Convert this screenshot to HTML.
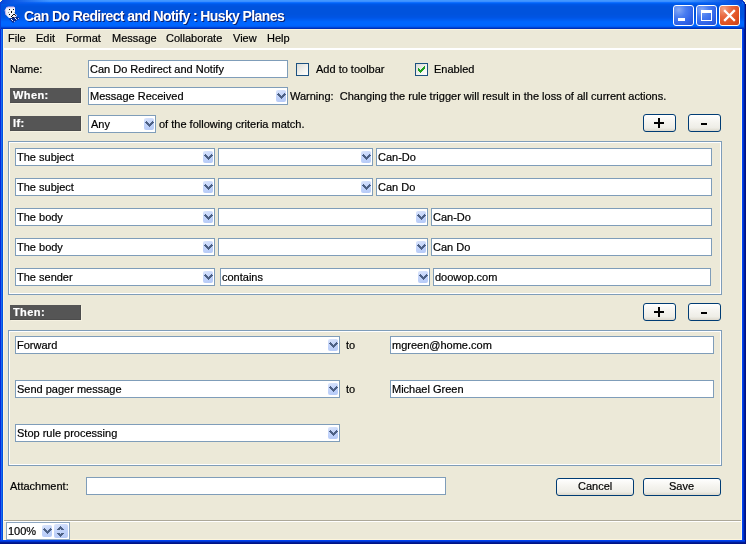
<!DOCTYPE html>
<html><head><meta charset="utf-8">
<style>
*{box-sizing:border-box;margin:0;padding:0}
html,body{width:746px;height:544px;overflow:hidden;background:#FFF9E6}
body{position:relative;will-change:transform;font-family:"Liberation Sans",sans-serif;font-size:11px;color:#000}
.a{position:absolute}
.t{position:absolute;white-space:pre;line-height:13px;font-size:11px;-webkit-text-stroke:0.2px #000}
.tb{position:absolute;border:1px solid #7F9DB9;background:#fff}
.ddb{position:absolute;right:1px;top:2px;width:10px;height:12px;border-radius:2px;background:linear-gradient(160deg,#DCE6FC 0%,#C3D4FA 45%,#B4C9F7 100%)}
.ddb svg{position:absolute;left:0;top:0}
.lbl{position:absolute;left:10px;width:71px;height:15px;background:#555555;color:#fff;font-weight:bold;box-shadow:inset -1px -1px 0 #4C4C4C,1px 1px 0 #F6F2E2}
.lbl span{position:absolute;left:3px;top:1px;line-height:13px;white-space:pre;letter-spacing:0.4px;-webkit-text-stroke:0.2px #fff}
.btn{position:absolute;border:1px solid #003C74;border-radius:3px;background:linear-gradient(180deg,#FFFFFF 0%,#F7F6F2 35%,#EEEDE6 80%,#DCD8CC 100%)}
.grp{position:absolute;border:1px solid #7F9DB9;box-shadow:inset 1px 1px 0 #fff,inset -1px -1px 0 #fff}
</style></head><body>
<!-- window frame -->
<div class="a" style="left:0;top:0;width:746px;height:544px;background:#0040E0"></div>
<!-- title bar -->
<div class="a" style="left:0;top:0;width:746px;height:29px;border-radius:0;background:linear-gradient(180deg,#4297FF 0px,#4297FF 1px,#3A8EFF 1px,#3A8EFF 2px,#0E6FFF 2px,#0E6FFF 3px,#0060F2 3px,#0060F2 4px,#0057E6 4px,#0057E6 5px,#0055E2 5px,#0055E2 6px,#0053DE 6px,#0053DE 7px,#0053DD 7px,#0053DD 8px,#0053DD 8px,#0053DD 9px,#0053DD 9px,#0053DD 10px,#0053DD 10px,#0053DD 11px,#0053DD 11px,#0053DD 12px,#0053DD 12px,#0053DD 13px,#0053DD 13px,#0053DD 14px,#0053DE 14px,#0053DE 15px,#0054E0 15px,#0054E0 16px,#0054E2 16px,#0054E2 17px,#0055E5 17px,#0055E5 18px,#0058EA 18px,#0058EA 19px,#005CF0 19px,#005CF0 20px,#0060F6 20px,#0060F6 21px,#0065FC 21px,#0065FC 22px,#0066FF 22px,#0066FF 23px,#0066FF 23px,#0066FF 24px,#0066FF 24px,#0066FF 25px,#0064FD 25px,#0064FD 26px,#005CF4 26px,#005CF4 27px,#0046D6 27px,#0046D6 28px,#0030B8 28px,#0030B8 29px)"></div>
<div class="a" style="left:0;top:0;width:50px;height:4px;background:linear-gradient(90deg,#0848D8 0px,#0A58E6 12px,rgba(0,88,230,0) 50px)"></div>
<div class="a" style="left:690px;top:0;width:52px;height:4px;background:linear-gradient(90deg,rgba(0,88,230,0) 0px,#0A58E6 40px,#0848D8 52px)"></div>
<svg class="a" style="left:736px;top:0" width="10" height="10" shape-rendering="crispEdges">
<rect x="4" y="0" width="3" height="1" fill="#0A3CC8"/><rect x="6" y="1" width="2" height="1" fill="#0A3CC8"/><rect x="7" y="2" width="2" height="1" fill="#0830B8"/><rect x="8" y="3" width="1" height="2" fill="#0628A8"/>
<rect x="7" y="0" width="3" height="1" fill="#FFF9E6"/><rect x="8" y="1" width="2" height="1" fill="#FFF9E6"/><rect x="9" y="2" width="1" height="2" fill="#FFF9E6"/>
</svg>
<svg class="a" style="left:0;top:0" width="3" height="3" shape-rendering="crispEdges"><rect x="0" y="0" width="2" height="1" fill="#FFF9E6"/><rect x="0" y="1" width="1" height="1" fill="#FFF9E6"/><rect x="1" y="1" width="1" height="1" fill="#0A40C8"/></svg>
<!-- left frame -->
<div class="a" style="left:0;top:29px;width:1px;height:515px;background:#0A28D8"></div>
<div class="a" style="left:1px;top:29px;width:1px;height:515px;background:#1A6CF0"></div>
<div class="a" style="left:2px;top:29px;width:1px;height:515px;background:#0052E0"></div>
<!-- right frame -->
<div class="a" style="left:742px;top:29px;width:1px;height:515px;background:#0044F2"></div>
<div class="a" style="left:743px;top:29px;width:1px;height:515px;background:#0032CC"></div>
<div class="a" style="left:744px;top:29px;width:1px;height:515px;background:#001C9A"></div>
<div class="a" style="left:744px;top:4px;width:1px;height:25px;background:linear-gradient(180deg,#0038C8,#0030B0)"></div>
<div class="a" style="left:745px;top:4px;width:1px;height:540px;background:#001385"></div>
<div class="a" style="left:0px;top:2px;width:1px;height:27px;background:#0840D8"></div>
<!-- bottom frame -->
<div class="a" style="left:0;top:540px;width:745px;height:1px;background:#0042F0"></div>
<div class="a" style="left:0;top:541px;width:745px;height:1px;background:#0034CE"></div>
<div class="a" style="left:0;top:542px;width:745px;height:1px;background:#001C9A"></div>
<div class="a" style="left:0;top:543px;width:746px;height:1px;background:#001385"></div>
<!-- client -->
<div class="a" style="left:3px;top:29px;width:739px;height:511px;background:#ECE9D8;border:1px solid #FDF5DC"></div>

<!-- title buttons -->
<div class="a" style="left:673px;top:5px;width:21px;height:21px;border:1px solid #fff;border-radius:3px;background:radial-gradient(circle at 25% 20%,#86A9F5 0%,#4A7DF0 35%,#2F62E8 70%,#2450D0 100%)">
<div class="a" style="left:4px;top:12px;width:7px;height:3px;background:#fff"></div></div>
<div class="a" style="left:696px;top:5px;width:21px;height:21px;border:1px solid #fff;border-radius:3px;background:radial-gradient(circle at 25% 20%,#86A9F5 0%,#4A7DF0 35%,#2F62E8 70%,#2450D0 100%)">
<div class="a" style="left:4px;top:4px;width:11px;height:11px;border:1px solid #fff;border-top-width:3px"></div></div>
<div class="a" style="left:719px;top:5px;width:21px;height:21px;border:1px solid #fff;border-radius:3px;background:radial-gradient(circle at 20% 15%,#F4A283 0%,#E8683F 35%,#E0501F 70%,#C8401A 100%)">
<svg class="a" style="left:0;top:0" width="19" height="19"><path d="M5 5 L14 14 M14 5 L5 14" stroke="#fff" stroke-width="2.3" stroke-linecap="square"/></svg></div>
<!-- title icon -->
<svg class="a" style="left:3px;top:5px" width="18" height="18" viewBox="0 0 18 18" shape-rendering="crispEdges">
<path d="M6 14 L11 11 L17 13 L10 18 Z" fill="#0B2C8C" shape-rendering="auto"/>
<path d="M3 3 L5 2 L8 2 L11 2 L12 3 L12 9 L14 10 L13 12 L9 13 L6 13 L3 10 L2 5 Z" fill="#F2F0F6" shape-rendering="auto"/>
<path d="M3 3 L5 2 L11 2 L12 3 M2 5 L3 10" stroke="#C9B2EC" stroke-width="1" fill="none" shape-rendering="auto"/>
<rect x="6" y="4" width="1" height="1" fill="#000"/><rect x="10" y="4" width="1" height="1" fill="#000"/>
<rect x="8" y="6" width="1" height="2" fill="#000"/><rect x="6" y="9" width="1" height="1" fill="#000"/>
<rect x="5" y="7" width="1" height="1" fill="#A0A0A0"/><rect x="11" y="7" width="1" height="1" fill="#B0B0B0"/>
<rect x="8" y="11" width="1" height="1" fill="#000"/><rect x="9" y="10" width="1" height="1" fill="#000"/>
<rect x="10" y="9" width="2" height="1" fill="#111"/><rect x="12" y="10" width="1" height="1" fill="#602020"/>
<rect x="9" y="12" width="2" height="1" fill="#0A0A30"/>
<rect x="8" y="14" width="1" height="1" fill="#fff"/><rect x="9" y="15" width="1" height="1" fill="#E8E8FF"/>
<rect x="12" y="13" width="1" height="1" fill="#fff"/><rect x="13" y="14" width="1" height="1" fill="#C8C8F0"/>
<rect x="15" y="13" width="1" height="1" fill="#B8B0F0"/><rect x="11" y="16" width="1" height="1" fill="#A8A0E0"/>
</svg>
<!-- title text -->
<div class="t" style="left:25px;top:9px;font-size:14px;letter-spacing:-0.6px;line-height:16px;font-weight:bold;color:#0A1E6E;-webkit-text-stroke:0">Can Do Redirect and Notify : Husky Planes</div>
<div class="t" style="left:24px;top:8px;font-size:14px;letter-spacing:-0.6px;line-height:16px;font-weight:bold;color:#fff;-webkit-text-stroke:0">Can Do Redirect and Notify : Husky Planes</div>

<!-- menu -->
<div class="t" style="left:8px;top:32px">File</div>
<div class="t" style="left:36px;top:32px">Edit</div>
<div class="t" style="left:66px;top:32px">Format</div>
<div class="t" style="left:112px;top:32px">Message</div>
<div class="t" style="left:166px;top:32px">Collaborate</div>
<div class="t" style="left:233px;top:32px">View</div>
<div class="t" style="left:267px;top:32px">Help</div>
<div class="a" style="left:4px;top:48px;width:737px;height:2px;background:#fff"></div>

<!-- name row -->
<div class="t" style="left:10px;top:63px">Name:</div>
<div class="tb" style="left:88px;top:60px;width:200px;height:18px"></div>
<div class="t" style="left:90px;top:63px">Can Do Redirect and Notify</div>
<div class="a" style="left:296px;top:63px;width:13px;height:13px;border:1px solid #1C5180;background:linear-gradient(135deg,#DCDCD7 0%,#F4F4F0 60%,#FFFFFF 100%)"></div>
<div class="t" style="left:316px;top:63px">Add to toolbar</div>
<div class="a" style="left:415px;top:63px;width:13px;height:13px;border:1px solid #1C5180;background:linear-gradient(135deg,#DCDCD7 0%,#F4F4F0 60%,#FFFFFF 100%)">
<svg width="11" height="11" style="position:absolute;left:0;top:0" fill="#21A121" shape-rendering="crispEdges"><rect x="8" y="2" width="1" height="1"/><rect x="7" y="3" width="2" height="1"/><rect x="2" y="4" width="1" height="1"/><rect x="6" y="4" width="3" height="1"/><rect x="2" y="5" width="2" height="1"/><rect x="5" y="5" width="3" height="1"/><rect x="2" y="6" width="5" height="1"/><rect x="3" y="7" width="3" height="1"/><rect x="4" y="8" width="1" height="1"/></svg></div>
<div class="t" style="left:434px;top:63px">Enabled</div>

<!-- when row -->
<div class="lbl" style="top:88px"><span>When:</span></div>
<div class="tb" style="left:88px;top:87px;width:200px;height:18px"><div class="ddb"><svg width="10" height="12" fill="#4D6185" shape-rendering="crispEdges"><rect x="2" y="3" width="1" height="1"/><rect x="8" y="3" width="1" height="1"/><rect x="1" y="4" width="3" height="1"/><rect x="7" y="4" width="3" height="1"/><rect x="2" y="5" width="3" height="1"/><rect x="6" y="5" width="3" height="1"/><rect x="3" y="6" width="5" height="1"/><rect x="4" y="7" width="3" height="1"/><rect x="5" y="8" width="1" height="1"/></svg></div></div>
<div class="t" style="left:90px;top:90px">Message Received</div>
<div class="t" style="left:290px;top:90px">Warning:  Changing the rule trigger will result in the loss of all current actions.</div>

<!-- if row -->
<div class="lbl" style="top:116px"><span>If:</span></div>
<div class="tb" style="left:88px;top:115px;width:68px;height:18px"><div class="ddb"><svg width="10" height="12" fill="#4D6185" shape-rendering="crispEdges"><rect x="2" y="3" width="1" height="1"/><rect x="8" y="3" width="1" height="1"/><rect x="1" y="4" width="3" height="1"/><rect x="7" y="4" width="3" height="1"/><rect x="2" y="5" width="3" height="1"/><rect x="6" y="5" width="3" height="1"/><rect x="3" y="6" width="5" height="1"/><rect x="4" y="7" width="3" height="1"/><rect x="5" y="8" width="1" height="1"/></svg></div></div>
<div class="t" style="left:91px;top:118px">Any</div>
<div class="t" style="left:159px;top:118px">of the following criteria match.</div>
<div class="btn" style="left:643px;top:114px;width:33px;height:18px"><div class="a" style="left:10px;top:7px;width:10px;height:2px;background:#000"></div><div class="a" style="left:14px;top:3px;width:2px;height:10px;background:#000"></div></div>
<div class="btn" style="left:688px;top:114px;width:33px;height:18px"><div class="a" style="left:12px;top:8px;width:6px;height:2px;background:#000"></div></div>

<!-- criteria group -->
<div class="grp" style="left:8px;top:141px;width:714px;height:154px"></div>
<div class="tb" style="left:15px;top:148px;width:200px;height:18px"><div class="ddb"><svg width="10" height="12" fill="#4D6185" shape-rendering="crispEdges"><rect x="2" y="3" width="1" height="1"/><rect x="8" y="3" width="1" height="1"/><rect x="1" y="4" width="3" height="1"/><rect x="7" y="4" width="3" height="1"/><rect x="2" y="5" width="3" height="1"/><rect x="6" y="5" width="3" height="1"/><rect x="3" y="6" width="5" height="1"/><rect x="4" y="7" width="3" height="1"/><rect x="5" y="8" width="1" height="1"/></svg></div></div>
<div class="t" style="left:17px;top:151px">The subject</div>
<div class="tb" style="left:218px;top:148px;width:155px;height:18px"><div class="ddb"><svg width="10" height="12" fill="#4D6185" shape-rendering="crispEdges"><rect x="2" y="3" width="1" height="1"/><rect x="8" y="3" width="1" height="1"/><rect x="1" y="4" width="3" height="1"/><rect x="7" y="4" width="3" height="1"/><rect x="2" y="5" width="3" height="1"/><rect x="6" y="5" width="3" height="1"/><rect x="3" y="6" width="5" height="1"/><rect x="4" y="7" width="3" height="1"/><rect x="5" y="8" width="1" height="1"/></svg></div></div>
<div class="tb" style="left:376px;top:148px;width:336px;height:18px"></div>
<div class="t" style="left:378px;top:151px">Can-Do</div>
<div class="tb" style="left:15px;top:178px;width:200px;height:18px"><div class="ddb"><svg width="10" height="12" fill="#4D6185" shape-rendering="crispEdges"><rect x="2" y="3" width="1" height="1"/><rect x="8" y="3" width="1" height="1"/><rect x="1" y="4" width="3" height="1"/><rect x="7" y="4" width="3" height="1"/><rect x="2" y="5" width="3" height="1"/><rect x="6" y="5" width="3" height="1"/><rect x="3" y="6" width="5" height="1"/><rect x="4" y="7" width="3" height="1"/><rect x="5" y="8" width="1" height="1"/></svg></div></div>
<div class="t" style="left:17px;top:181px">The subject</div>
<div class="tb" style="left:218px;top:178px;width:155px;height:18px"><div class="ddb"><svg width="10" height="12" fill="#4D6185" shape-rendering="crispEdges"><rect x="2" y="3" width="1" height="1"/><rect x="8" y="3" width="1" height="1"/><rect x="1" y="4" width="3" height="1"/><rect x="7" y="4" width="3" height="1"/><rect x="2" y="5" width="3" height="1"/><rect x="6" y="5" width="3" height="1"/><rect x="3" y="6" width="5" height="1"/><rect x="4" y="7" width="3" height="1"/><rect x="5" y="8" width="1" height="1"/></svg></div></div>
<div class="tb" style="left:376px;top:178px;width:336px;height:18px"></div>
<div class="t" style="left:378px;top:181px">Can Do</div>
<div class="tb" style="left:15px;top:208px;width:200px;height:18px"><div class="ddb"><svg width="10" height="12" fill="#4D6185" shape-rendering="crispEdges"><rect x="2" y="3" width="1" height="1"/><rect x="8" y="3" width="1" height="1"/><rect x="1" y="4" width="3" height="1"/><rect x="7" y="4" width="3" height="1"/><rect x="2" y="5" width="3" height="1"/><rect x="6" y="5" width="3" height="1"/><rect x="3" y="6" width="5" height="1"/><rect x="4" y="7" width="3" height="1"/><rect x="5" y="8" width="1" height="1"/></svg></div></div>
<div class="t" style="left:17px;top:211px">The body</div>
<div class="tb" style="left:218px;top:208px;width:210px;height:18px"><div class="ddb"><svg width="10" height="12" fill="#4D6185" shape-rendering="crispEdges"><rect x="2" y="3" width="1" height="1"/><rect x="8" y="3" width="1" height="1"/><rect x="1" y="4" width="3" height="1"/><rect x="7" y="4" width="3" height="1"/><rect x="2" y="5" width="3" height="1"/><rect x="6" y="5" width="3" height="1"/><rect x="3" y="6" width="5" height="1"/><rect x="4" y="7" width="3" height="1"/><rect x="5" y="8" width="1" height="1"/></svg></div></div>
<div class="tb" style="left:431px;top:208px;width:281px;height:18px"></div>
<div class="t" style="left:433px;top:211px">Can-Do</div>
<div class="tb" style="left:15px;top:238px;width:200px;height:18px"><div class="ddb"><svg width="10" height="12" fill="#4D6185" shape-rendering="crispEdges"><rect x="2" y="3" width="1" height="1"/><rect x="8" y="3" width="1" height="1"/><rect x="1" y="4" width="3" height="1"/><rect x="7" y="4" width="3" height="1"/><rect x="2" y="5" width="3" height="1"/><rect x="6" y="5" width="3" height="1"/><rect x="3" y="6" width="5" height="1"/><rect x="4" y="7" width="3" height="1"/><rect x="5" y="8" width="1" height="1"/></svg></div></div>
<div class="t" style="left:17px;top:241px">The body</div>
<div class="tb" style="left:218px;top:238px;width:210px;height:18px"><div class="ddb"><svg width="10" height="12" fill="#4D6185" shape-rendering="crispEdges"><rect x="2" y="3" width="1" height="1"/><rect x="8" y="3" width="1" height="1"/><rect x="1" y="4" width="3" height="1"/><rect x="7" y="4" width="3" height="1"/><rect x="2" y="5" width="3" height="1"/><rect x="6" y="5" width="3" height="1"/><rect x="3" y="6" width="5" height="1"/><rect x="4" y="7" width="3" height="1"/><rect x="5" y="8" width="1" height="1"/></svg></div></div>
<div class="tb" style="left:431px;top:238px;width:281px;height:18px"></div>
<div class="t" style="left:433px;top:241px">Can Do</div>
<div class="tb" style="left:15px;top:268px;width:200px;height:18px"><div class="ddb"><svg width="10" height="12" fill="#4D6185" shape-rendering="crispEdges"><rect x="2" y="3" width="1" height="1"/><rect x="8" y="3" width="1" height="1"/><rect x="1" y="4" width="3" height="1"/><rect x="7" y="4" width="3" height="1"/><rect x="2" y="5" width="3" height="1"/><rect x="6" y="5" width="3" height="1"/><rect x="3" y="6" width="5" height="1"/><rect x="4" y="7" width="3" height="1"/><rect x="5" y="8" width="1" height="1"/></svg></div></div>
<div class="t" style="left:17px;top:271px">The sender</div>
<div class="tb" style="left:220px;top:268px;width:210px;height:18px"><div class="ddb"><svg width="10" height="12" fill="#4D6185" shape-rendering="crispEdges"><rect x="2" y="3" width="1" height="1"/><rect x="8" y="3" width="1" height="1"/><rect x="1" y="4" width="3" height="1"/><rect x="7" y="4" width="3" height="1"/><rect x="2" y="5" width="3" height="1"/><rect x="6" y="5" width="3" height="1"/><rect x="3" y="6" width="5" height="1"/><rect x="4" y="7" width="3" height="1"/><rect x="5" y="8" width="1" height="1"/></svg></div></div>
<div class="t" style="left:222px;top:271px">contains</div>
<div class="tb" style="left:433px;top:268px;width:278px;height:18px"></div>
<div class="t" style="left:435px;top:271px">doowop.com</div>
<!-- then row -->
<div class="lbl" style="top:305px"><span>Then:</span></div>
<div class="btn" style="left:643px;top:303px;width:33px;height:18px"><div class="a" style="left:10px;top:7px;width:10px;height:2px;background:#000"></div><div class="a" style="left:14px;top:3px;width:2px;height:10px;background:#000"></div></div>
<div class="btn" style="left:688px;top:303px;width:33px;height:18px"><div class="a" style="left:12px;top:8px;width:6px;height:2px;background:#000"></div></div>
<!-- actions group -->
<div class="grp" style="left:8px;top:330px;width:714px;height:136px"></div>
<div class="tb" style="left:15px;top:336px;width:325px;height:18px"><div class="ddb"><svg width="10" height="12" fill="#4D6185" shape-rendering="crispEdges"><rect x="2" y="3" width="1" height="1"/><rect x="8" y="3" width="1" height="1"/><rect x="1" y="4" width="3" height="1"/><rect x="7" y="4" width="3" height="1"/><rect x="2" y="5" width="3" height="1"/><rect x="6" y="5" width="3" height="1"/><rect x="3" y="6" width="5" height="1"/><rect x="4" y="7" width="3" height="1"/><rect x="5" y="8" width="1" height="1"/></svg></div></div>
<div class="t" style="left:17px;top:339px">Forward</div>
<div class="t" style="left:346px;top:339px">to</div>
<div class="tb" style="left:390px;top:336px;width:324px;height:18px"></div>
<div class="t" style="left:392px;top:339px">mgreen@home.com</div>
<div class="tb" style="left:15px;top:380px;width:325px;height:18px"><div class="ddb"><svg width="10" height="12" fill="#4D6185" shape-rendering="crispEdges"><rect x="2" y="3" width="1" height="1"/><rect x="8" y="3" width="1" height="1"/><rect x="1" y="4" width="3" height="1"/><rect x="7" y="4" width="3" height="1"/><rect x="2" y="5" width="3" height="1"/><rect x="6" y="5" width="3" height="1"/><rect x="3" y="6" width="5" height="1"/><rect x="4" y="7" width="3" height="1"/><rect x="5" y="8" width="1" height="1"/></svg></div></div>
<div class="t" style="left:17px;top:383px">Send pager message</div>
<div class="t" style="left:346px;top:383px">to</div>
<div class="tb" style="left:390px;top:380px;width:324px;height:18px"></div>
<div class="t" style="left:392px;top:383px">Michael Green</div>
<div class="tb" style="left:15px;top:424px;width:325px;height:18px"><div class="ddb"><svg width="10" height="12" fill="#4D6185" shape-rendering="crispEdges"><rect x="2" y="3" width="1" height="1"/><rect x="8" y="3" width="1" height="1"/><rect x="1" y="4" width="3" height="1"/><rect x="7" y="4" width="3" height="1"/><rect x="2" y="5" width="3" height="1"/><rect x="6" y="5" width="3" height="1"/><rect x="3" y="6" width="5" height="1"/><rect x="4" y="7" width="3" height="1"/><rect x="5" y="8" width="1" height="1"/></svg></div></div>
<div class="t" style="left:17px;top:427px">Stop rule processing</div>
<!-- attachment -->
<div class="t" style="left:10px;top:480px">Attachment:</div>
<div class="tb" style="left:86px;top:477px;width:360px;height:18px"></div>
<div class="btn" style="left:556px;top:478px;width:78px;height:18px"></div>
<div class="t" style="left:578px;top:480px">Cancel</div>
<div class="btn" style="left:643px;top:478px;width:78px;height:18px"></div>
<div class="t" style="left:669px;top:480px">Save</div>
<!-- status bar -->
<div class="a" style="left:4px;top:520px;width:737px;height:1px;background:#ACA899"></div>
<div class="a" style="left:4px;top:521px;width:737px;height:1px;background:#fff"></div>
<div class="a" style="left:4px;top:522px;width:2px;height:17px;background:#F3EEDC"></div>
<div class="tb" style="left:6px;top:522px;width:64px;height:18px;border-color:#8DA6C0"><div class="ddb" style="left:35px;top:2px;right:auto"><svg width="10" height="12" fill="#4D6185" shape-rendering="crispEdges"><rect x="2" y="3" width="1" height="1"/><rect x="8" y="3" width="1" height="1"/><rect x="1" y="4" width="3" height="1"/><rect x="7" y="4" width="3" height="1"/><rect x="2" y="5" width="3" height="1"/><rect x="6" y="5" width="3" height="1"/><rect x="3" y="6" width="5" height="1"/><rect x="4" y="7" width="3" height="1"/><rect x="5" y="8" width="1" height="1"/></svg></div><div class="ddb" style="left:47px;top:1px;right:auto;width:14px;height:14px"><svg width="14" height="14" fill="#4D6185" shape-rendering="crispEdges"><rect x="6" y="2" width="1" height="1"/><rect x="5" y="3" width="3" height="1"/><rect x="4" y="4" width="5" height="1"/><rect x="3" y="5" width="3" height="1"/><rect x="7" y="5" width="3" height="1"/><rect x="3" y="9" width="3" height="1"/><rect x="7" y="9" width="3" height="1"/><rect x="4" y="10" width="5" height="1"/><rect x="5" y="11" width="3" height="1"/><rect x="6" y="12" width="1" height="1"/></svg></div></div>
<div class="t" style="left:8px;top:525px">100%</div>
</body></html>
